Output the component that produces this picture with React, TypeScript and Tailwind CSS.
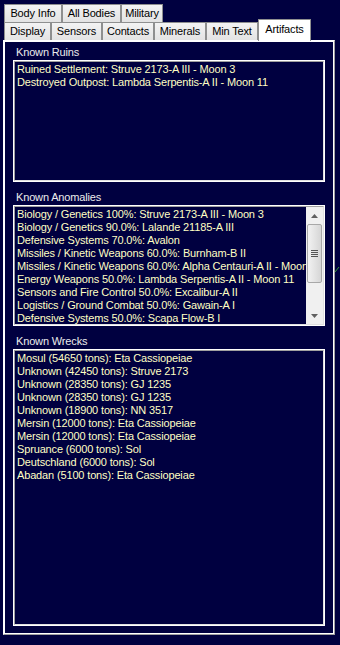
import React from "react";

const topTabs = [
  { label: "Body Info", w: "w-[58px]" },
  { label: "All Bodies", w: "w-[59px]" },
  { label: "Military", w: "w-[42px]" },
];

const lowerTabs = [
  { label: "Display", w: "w-[47px]" },
  { label: "Sensors", w: "w-[51px]" },
  { label: "Contacts", w: "w-[52px]" },
  { label: "Minerals", w: "w-[52px]" },
  { label: "Min Text", w: "w-[52px]" },
];

const ruins = [
  "Ruined Settlement: Struve 2173-A III - Moon 3",
  "Destroyed Outpost: Lambda Serpentis-A II - Moon 11",
];

const anomalies = [
  "Biology / Genetics 100%: Struve 2173-A III - Moon 3",
  "Biology / Genetics 90.0%: Lalande 21185-A III",
  "Defensive Systems 70.0%: Avalon",
  "Missiles / Kinetic Weapons 60.0%: Burnham-B II",
  "Missiles / Kinetic Weapons 60.0%: Alpha Centauri-A II - Moon 1",
  "Energy Weapons 50.0%: Lambda Serpentis-A II - Moon 11",
  "Sensors and Fire Control 50.0%: Excalibur-A II",
  "Logistics / Ground Combat 50.0%: Gawain-A I",
  "Defensive Systems 50.0%: Scapa Flow-B I",
];

const wrecks = [
  "Mosul (54650 tons): Eta Cassiopeiae",
  "Unknown (42450 tons): Struve 2173",
  "Unknown (28350 tons): GJ 1235",
  "Unknown (28350 tons): GJ 1235",
  "Unknown (18900 tons): NN 3517",
  "Mersin (12000 tons): Eta Cassiopeiae",
  "Mersin (12000 tons): Eta Cassiopeiae",
  "Spruance (6000 tons): Sol",
  "Deutschland (6000 tons): Sol",
  "Abadan (5100 tons): Eta Cassiopeiae",
];

const Tab = ({ label, w }: { label: string; w: string }) => (
  <div
    className={`${w} h-[18px] shrink-0 border border-[#8e8f8f] border-b-0 bg-gradient-to-b from-[#f3f3f3] to-[#e3e3e3] text-black text-[11px] leading-[17px] text-center whitespace-nowrap`}
  >
    {label}
  </div>
);

const Items = ({ items }: { items: string[] }) => (
  <div className="flex flex-col pl-[2px] pt-[1px]">
    {items.map((t, i) => (
      <div key={i} className="h-[13px] leading-[13px] whitespace-nowrap text-[#ffffc4]">
        {t}
      </div>
    ))}
  </div>
);

const ListBox = ({ h, children }: { h: string; children: React.ReactNode }) => (
  <div className={`${h} w-[312px] border border-white`}>
    <div className="h-full w-full border border-[#a0a0a0] border-r-[#e0e0e0] border-b-[#e0e0e0] overflow-hidden flex">
      {children}
    </div>
  </div>
);

const Label = ({ text }: { text: string }) => (
  <div className="h-[18px] pl-[3px] leading-[21px] text-[#ececec]">{text}</div>
);

const ScrollBar = () => (
  <div className="w-[17px] h-full shrink-0 bg-[#f0f0f0] flex flex-col items-center">
    <div className="h-[17px] w-full flex items-center justify-center">
      <svg width="7" height="4" viewBox="0 0 7 4">
        <path d="M0 4 L3.5 0 L7 4 Z" fill="#606060" />
      </svg>
    </div>
    <div className="h-[59px] w-[15px] border border-[#a8a8a8] rounded-[2px] bg-gradient-to-r from-[#f2f2f2] via-[#e4e4e4] to-[#d6d6d6] flex flex-col items-center justify-center gap-[1px]">
      <div className="w-[7px] h-[1px] bg-[#555]" />
      <div className="w-[7px] h-[1px] bg-[#555]" />
      <div className="w-[7px] h-[1px] bg-[#555]" />
      <div className="w-[7px] h-[1px] bg-[#555]" />
    </div>
    <div className="flex-1" />
    <div className="h-[17px] w-full flex items-center justify-center">
      <svg width="7" height="4" viewBox="0 0 7 4">
        <path d="M0 0 L3.5 4 L7 0 Z" fill="#606060" />
      </svg>
    </div>
  </div>
);

export default function App() {
  return (
    <div className="relative w-[340px] h-[645px] bg-[#000040] pt-[4px] pl-[3px] font-['Microsoft_Sans_Serif','Liberation_Sans',Arial,sans-serif] text-[11px] tracking-[-0.15px] overflow-hidden">
      <div className="flex pl-[1px] h-[18px]">
        {topTabs.map((t) => (
          <Tab key={t.label} {...t} />
        ))}
      </div>
      <div className="flex pl-[1px] h-[18px] items-start">
        {lowerTabs.map((t) => (
          <Tab key={t.label} {...t} />
        ))}
        <div className="relative z-10 -mt-[3px] w-[53px] h-[22px] shrink-0 border border-[#8e8f8f] border-b-0 bg-white text-black text-[11px] leading-[18px] text-center">
          Artifacts
        </div>
      </div>

      {/* tab page */}
      <div className="w-[332px] h-[595px] border border-white border-r-[#a0a0a0] border-b-[#a0a0a0]">
        <div className="h-full w-full border border-white pl-[8px]">
          <Label text="Known Ruins" />
          <ListBox h="h-[122px]">
            <Items items={ruins} />
          </ListBox>
          <div className="h-[5px]" />
          <Label text="Known Anomalies" />
          <ListBox h="h-[121px]">
            <div className="flex-1 overflow-hidden">
              <Items items={anomalies} />
            </div>
            <ScrollBar />
          </ListBox>
          <div className="h-[5px]" />
          <Label text="Known Wrecks" />
          <ListBox h="h-[277px]">
            <Items items={wrecks} />
          </ListBox>
        </div>
      </div>

      <svg className="absolute left-[335px] top-[266px]" width="5" height="6" viewBox="0 0 5 6">
        <path d="M0 6 L4 1" stroke="#3a9a3a" strokeWidth="1" />
      </svg>
    </div>
  );
}
